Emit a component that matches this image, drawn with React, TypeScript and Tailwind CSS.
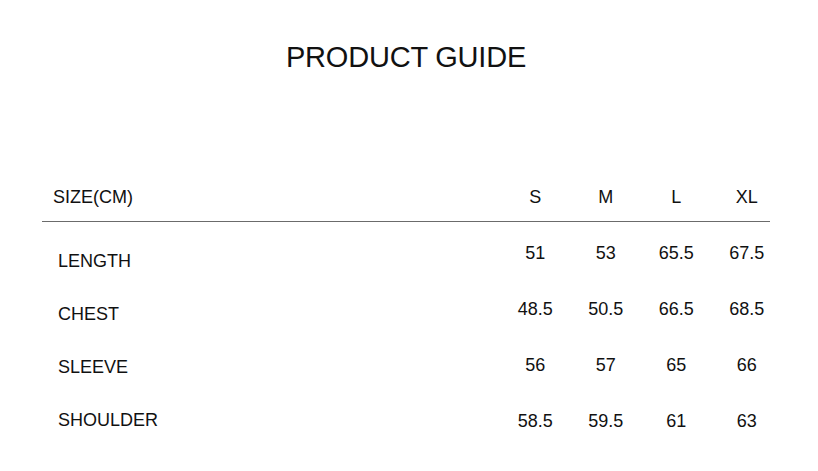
import React from 'react';

const sizes = ['S', 'M', 'L', 'XL'];

const rows = [
  { label: 'LENGTH', values: ['51', '53', '65.5', '67.5'] },
  { label: 'CHEST', values: ['48.5', '50.5', '66.5', '68.5'] },
  { label: 'SLEEVE', values: ['56', '57', '65', '66'] },
  { label: 'SHOULDER', values: ['58.5', '59.5', '61', '63'] },
];

const App: React.FC = () => {
  return (
    <div className="min-h-screen bg-white font-['Liberation_Sans',Arial,sans-serif] text-[#111]">
      <h1 className="pr-[6px] pt-[40px] text-center text-[29px] leading-[34px] tracking-[-0.2px]">
        PRODUCT GUIDE
      </h1>

      <div className="ml-[42px] mt-[111px] w-[740px]">
        {/* header */}
        <div className="flex h-[36px] text-[18px] leading-[24px]">
          <div className="flex-1 pl-[11px]">SIZE(CM)</div>
          <div className="grid w-[282px] grid-cols-4 text-center">
            {sizes.map((s) => (
              <span key={s}>{s}</span>
            ))}
          </div>
        </div>
        <div className="h-px w-[728px] bg-[#6b6b6b]" />

        {/* body */}
        <div className="flex text-[18px] leading-[24px]">
          <div className="flex flex-1 flex-col gap-[29px] pl-[16px] pt-[27px]">
            {rows.map((r) => (
              <span key={r.label}>{r.label}</span>
            ))}
          </div>
          <div className="grid w-[282px] grid-cols-4 gap-y-[32px] pt-[19px] text-center">
            {rows.map((r) =>
              r.values.map((v, i) => <span key={r.label + i}>{v}</span>)
            )}
          </div>
        </div>
      </div>
    </div>
  );
};

export default App;
